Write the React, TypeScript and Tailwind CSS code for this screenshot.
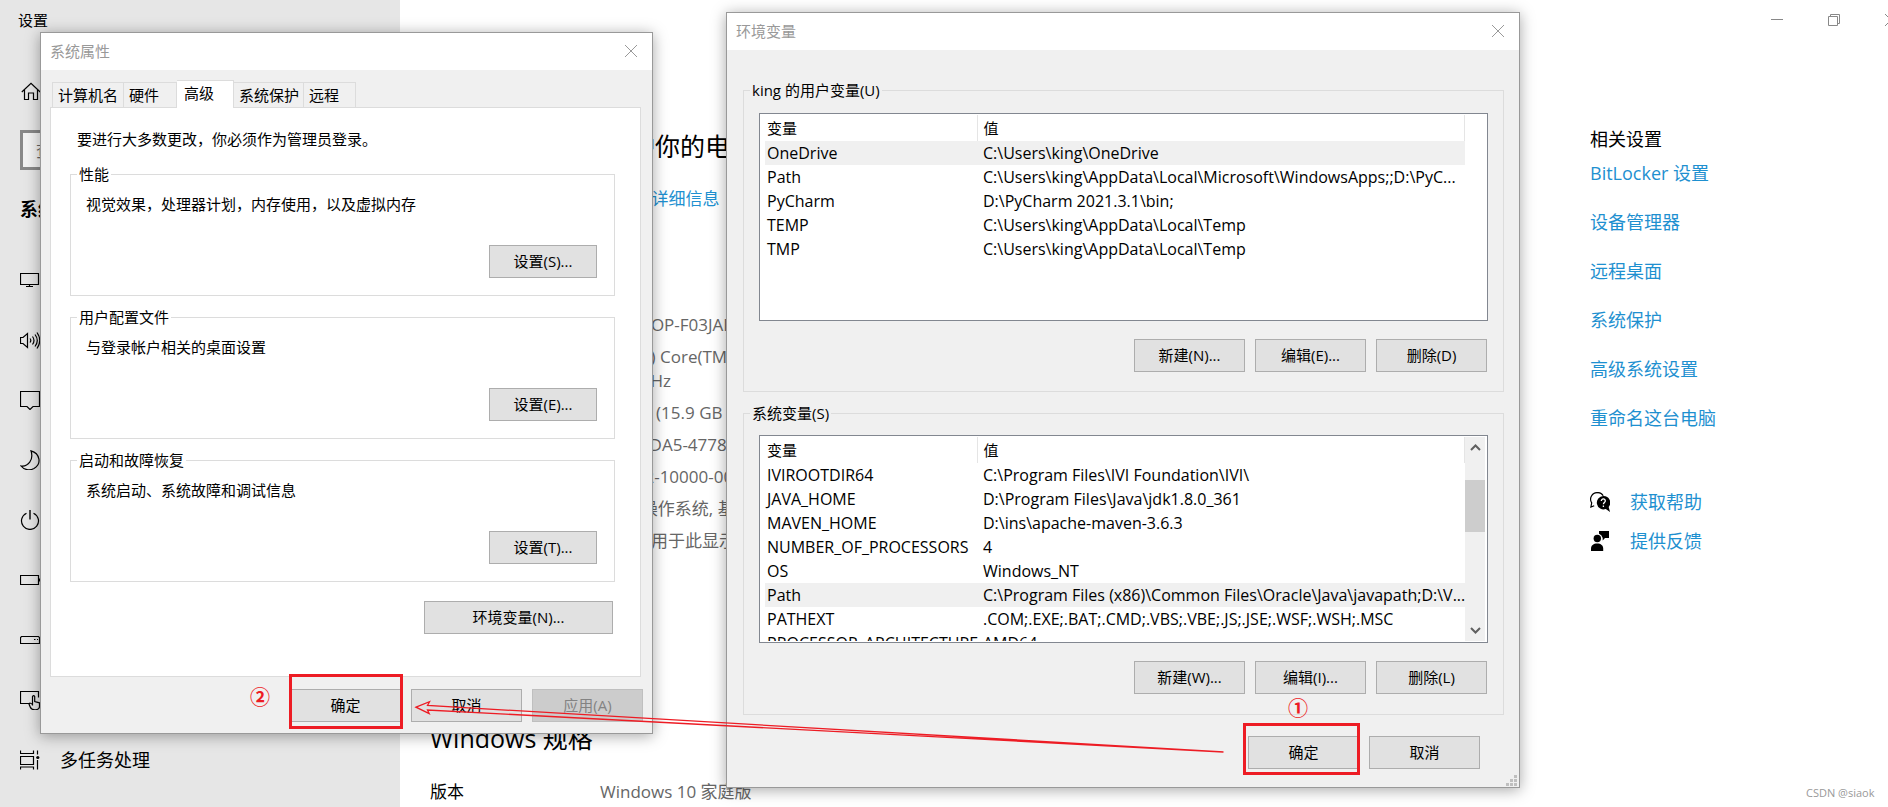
import React from 'react';
import clsx from 'clsx';

interface Variable {
  name: string;
  value: string;
}

const USER_VARIABLES: Variable[] = [
  { name: 'OneDrive', value: 'C:\\Users\\king\\OneDrive' },
  { name: 'Path', value: 'C:\\Users\\king\\AppData\\Local\\Microsoft\\WindowsApps;;D:\\PyC...' },
  { name: 'PyCharm', value: 'D:\\PyCharm 2021.3.1\\bin;' },
  { name: 'TEMP', value: 'C:\\Users\\king\\AppData\\Local\\Temp' },
  { name: 'TMP', value: 'C:\\Users\\king\\AppData\\Local\\Temp' },
];

const SYSTEM_VARIABLES: Variable[] = [
  { name: 'IVIROOTDIR64', value: 'C:\\Program Files\\IVI Foundation\\IVI\\' },
  { name: 'JAVA_HOME', value: 'D:\\Program Files\\Java\\jdk1.8.0_361' },
  { name: 'MAVEN_HOME', value: 'D:\\ins\\apache-maven-3.6.3' },
  { name: 'NUMBER_OF_PROCESSORS', value: '4' },
  { name: 'OS', value: 'Windows_NT' },
  { name: 'Path', value: 'C:\\Program Files (x86)\\Common Files\\Oracle\\Java\\javapath;D:\\V...' },
  { name: 'PATHEXT', value: '.COM;.EXE;.BAT;.CMD;.VBS;.VBE;.JS;.JSE;.WSF;.WSH;.MSC' },
  { name: 'PROCESSOR_ARCHITECTURE', value: 'AMD64' },
];

const SETTING_GROUPS = [
  { title: '性能', text: '视觉效果，处理器计划，内存使用，以及虚拟内存', button: '设置(S)...' },
  { title: '用户配置文件', text: '与登录帐户相关的桌面设置', button: '设置(E)...' },
  { title: '启动和故障恢复', text: '系统启动、系统故障和调试信息', button: '设置(T)...' },
];

const SPECS: { label: string; value: React.ReactNode }[] = [
  { label: '设备名称', value: 'DESKTOP-F03JAIK' },
  {
    label: '处理器',
    value: (
      <>
        Intel(R) Core(TM) i5
        <br />
        2.30 GHz
      </>
    ),
  },
  { label: '机带 RAM', value: '8.0 GB (15.9 GB' },
  { label: '设备 ID', value: '2C614DA5-4778' },
  { label: '产品 ID', value: 'M0342-10000-000' },
  { label: '系统类型', value: '64 位操作系统, 基于' },
  { label: '笔和触控', value: '没有可用于此显示器' },
];

const RELATED_LINKS = ['BitLocker 设置', '设备管理器', '远程桌面', '系统保护', '高级系统设置', '重命名这台电脑'];

/* ---------- Sidebar ---------- */

const NAV_ITEMS: { label: string; showLabel?: boolean; icon: React.ReactNode }[] = [
  { label: '显示', icon: <path d="M.5 3.5h18v11H.5zM6 16.5h7M9.5 14.5v2" /> },
  {
    label: '声音',
    icon: (
      <path d="M.5 7.5h2.500l4.500-4v14l-4.500-4H.500zM10 8.500q1.600 2 0 4M12.500 6.500q3 4 0 8M15 4.500q4.600 6 0 12M17 2.500q5.500 8 0 16" />
    ),
  },
  { label: '通知和操作', icon: <path d="M.5 1.500h19v15h-6.500l-3 3-3-3H.500z" /> },
  { label: '专注助手', icon: <path d="M11 .8c9 2.500 11 13 3 17.700-4.500 2.500-10 1.300-13-2.500 7 1 13-6 10-15.200z" /> },
  {
    label: '电源和睡眠',
    icon: (
      <>
        <path d="M6.500 3.200a8.500 8.500 0 1 0 7 0" />
        <path d="M10 0v9.500" strokeWidth="2" stroke="#444" />
      </>
    ),
  },
  { label: '电池', icon: <path d="M.5 5.500h18v9H.500zM19.500 8.500v3" /> },
  { label: '存储', icon: <path d="M1.500 6.500h17l1 1v6H.500v-6zM14 9.500h1.500M17 9.500h1.500" /> },
  {
    label: '平板电脑',
    icon: (
      <path d="M9 13.500H.500v-12h18v6M12.500 15.500v-9q1.200-1.800 2.200 0v5l4.800 1.300v3.700c0 4-8 4.500-9.300.500l-1.200-3q1-1.800 3.500.500" />
    ),
  },
  {
    label: '多任务处理',
    showLabel: true,
    icon: (
      <>
        <path d="M.5.500v3h13v-3M.500 6.500h13v8H.500zM.500 19.500v-2.500h13v2.500M17.500.500v4M17.500 10v9.500" />
        <circle cx="17.800" cy="7.500" r="1.600" fill="currentColor" stroke="none" />
      </>
    ),
  },
];

const Sidebar: React.FC = () => (
  <nav className="w-[400px] shrink-0 bg-[#e6e6e6] text-black">
    <div className="flex h-10 items-center pl-[18px] text-[15px]">设置</div>
    <a href="#home" aria-label="主页" className="mt-[42px] ml-[21px] block w-5">
      <svg className="h-5 w-5" viewBox="0 0 20 20" fill="none" stroke="currentColor" strokeWidth="1.2">
        <path d="M.8 10 10 1.300 19.200 10M3.500 8v9.500h4v-6.500h5v6.500h4V8" />
      </svg>
    </a>
    <div className="mt-7 ml-5">
      <input
        aria-label="查找设置"
        placeholder="查找设置"
        className="block h-10 w-[360px] border-[3px] border-[#888] bg-[#f2f2f2] pl-[13px] text-[17px] placeholder:text-[#666]"
      />
    </div>
    <h1 className="mt-[27px] ml-5 text-[18px] leading-6 font-bold">系统</h1>
    <ul className="mt-[29px]">
      {NAV_ITEMS.map((item) => (
        <li key={item.label}>
          <a href="#system" aria-label={item.label} className="flex h-[60px] items-center gap-5 pl-5">
            <svg className="h-5 w-5" viewBox="0 0 20 20" fill="none" stroke="currentColor" strokeWidth="1.200">
              {item.icon}
            </svg>
            {item.showLabel && <span className="text-[18px]">{item.label}</span>}
          </a>
        </li>
      ))}
    </ul>
  </nav>
);

/* ---------- Settings page behind the dialogs ---------- */

const SettingsPage: React.FC = () => (
  <div className="flex min-w-0 flex-1 flex-col bg-white">
    <header className="-mr-[31px] flex h-10 justify-end text-[#888]">
      <button aria-label="最小化" className="flex w-[57px] items-center justify-center">
        <svg className="h-3 w-3" viewBox="0 0 12 12" stroke="currentColor">
          <path d="M0 5.500h12" />
        </svg>
      </button>
      <button aria-label="还原" className="flex w-[57px] items-center justify-center">
        <svg className="h-3 w-3" viewBox="0 0 12 12" fill="none" stroke="currentColor">
          <path d="M.5 2.500h9v9h-9zM2.500 2.500v-2h9v9h-2" />
        </svg>
      </button>
      <button aria-label="关闭" className="flex w-[57px] items-center justify-center">
        <CloseIcon />
      </button>
    </header>

    <div className="flex flex-1">
      <main className="min-w-0 flex-1 pl-[30px]">
        <h2 className="pt-[88px] text-[25px] leading-9 whitespace-nowrap">系统正在监控并保护你的电脑</h2>
        <a href="#security" className="mt-[23px] block text-[17px] leading-6 text-[#1e90d0]">
          在 Windows 安全中心 中查看详细信息
        </a>
        <dl className="mt-[102px] grid grid-cols-[170px_1fr] gap-y-2 text-[17px] leading-6">
          {SPECS.map((spec) => (
            <React.Fragment key={spec.label}>
              <dt>{spec.label}</dt>
              <dd className="text-[#666]">{spec.value}</dd>
            </React.Fragment>
          ))}
        </dl>
        <h2 className="mt-[167px] text-[25px] leading-9">Windows 规格</h2>
        <dl className="mt-6 grid grid-cols-[170px_1fr] text-[17px] leading-6">
          <dt>版本</dt>
          <dd className="text-[#666]">Windows 10 家庭版</dd>
        </dl>
      </main>

      <aside className="flex w-[298px] shrink-0 flex-col pt-[87px] text-[18px] leading-6">
        <h3>相关设置</h3>
        <ul className="mt-[10px] flex flex-col gap-[25px] text-[#1e90d0]">
          {RELATED_LINKS.map((link) => (
            <li key={link}>
              <a href="#related">{link}</a>
            </li>
          ))}
        </ul>
        <ul className="mt-[60px] flex flex-col gap-[15px]">
          <li>
            <a href="#help" className="flex items-center gap-5">
              <svg className="h-5 w-5" viewBox="0 0 20 20">
                <path
                  d="M7.500.600a6.600 6.600 0 0 0-5.800 10.200L.900 15l3.300-1.300"
                  fill="none"
                  stroke="#000"
                  strokeWidth="1.200"
                />
                <path d="M7 .6c2.800-.2 5 1 6.200 3.200" fill="none" stroke="#000" strokeWidth="1.200" />
                <path d="M13.300 4a6.700 6.700 0 1 0 2.500 13l4.200 3-1.300-5A6.700 6.700 0 0 0 13.300 4z" />
                <path
                  d="M11.300 9c0-2.800 4.200-2.600 4 0-.1 1.500-1.900 1.500-1.900 3.200M13.400 13.600v1.500"
                  fill="none"
                  stroke="#fff"
                  strokeWidth="1.300"
                />
              </svg>
              <span className="text-[#1e90d0]">获取帮助</span>
            </a>
          </li>
          <li>
            <a href="#feedback" className="flex items-center gap-5">
              <svg className="h-5 w-5" viewBox="0 0 20 20">
                <path d="M9 0h10v7h-4l-2.300 2.500V7q-1-3.500-3.700-4.300z" />
                <circle cx="7.300" cy="7.500" r="3.700" />
                <path d="M1 20v-2.500c0-3 2.500-5 6.200-5s6 2 6 5V20z" />
              </svg>
              <span className="text-[#1e90d0]">提供反馈</span>
            </a>
          </li>
        </ul>
        <p className="mt-auto mb-1 pl-[216px] text-[11px] leading-5 whitespace-nowrap text-[#999]">CSDN @siaok</p>
      </aside>
    </div>
  </div>
);

/* ---------- Dialog parts ---------- */

const CloseIcon: React.FC = () => (
  <svg className="h-3 w-3" viewBox="0 0 12 12" stroke="currentColor">
    <path d="M0 0l12 12M12 0L0 12" />
  </svg>
);

const DialogButton: React.FC<{ children: React.ReactNode; className?: string; disabled?: boolean }> = ({
  children,
  className = 'w-[111px]',
  disabled,
}) => (
  <button
    disabled={disabled}
    className={clsx(
      'h-[33px] border pb-[2px]',
      disabled ? 'border-[#bfbfbf] bg-[#ccc] text-[#838383]' : 'border-[#adadad] bg-[#e1e1e1]',
      className
    )}
  >
    {children}
  </button>
);

const DialogTitle: React.FC<{ title: string }> = ({ title }) => (
  <div className="flex h-[37px] items-center justify-between bg-white pr-[15px] pb-[2px] pl-[9px] text-[#999]">
    <h2>{title}</h2>
    <button aria-label="关闭">
      <CloseIcon />
    </button>
  </div>
);

const GroupBox: React.FC<{ title: string; className?: string; children: React.ReactNode }> = ({
  title,
  className,
  children,
}) => (
  <fieldset className="border border-[#dcdcdc]">
    <legend className="ml-[6px] px-[2px]">{title}</legend>
    <div className={className}>{children}</div>
  </fieldset>
);

const VariableList: React.FC<{ variables: Variable[]; selected: string; scrollbar?: boolean }> = ({
  variables,
  selected,
  scrollbar,
}) => (
  <div className="flex h-[208px] overflow-hidden border border-[#828790] bg-white py-px pl-[5px]">
    <div className="min-w-0 flex-1 overflow-hidden">
      <table className="w-full table-fixed border-collapse text-left whitespace-nowrap">
        <thead>
          <tr className="h-[26px]">
            <th className="w-[212px] border-r border-[#e5e5e5] p-0 pl-[2px] font-normal">变量</th>
            <th className="border-r border-[#e5e5e5] p-0 pl-[6px] font-normal">值</th>
          </tr>
        </thead>
        <tbody className="text-[16px]">
          {variables.map((variable) => (
            <tr key={variable.name} className={clsx('h-6', variable.name === selected && 'bg-[#f0f0f0]')}>
              <td className="p-0 pl-[2px]">{variable.name}</td>
              <td className="p-0 pl-[6px]">{variable.value}</td>
            </tr>
          ))}
        </tbody>
      </table>
    </div>
    {scrollbar ? (
      <div className="mr-[2px] flex w-5 flex-col items-center justify-between bg-[#f0f0f0] text-[#606060]">
        <ScrollArrow d="M1 7l4.500-4.500L10 7" />
        <div className="mb-[66px] h-[52px] w-full bg-[#cdcdcd]" />
        <ScrollArrow d="M1 3l4.500 4.500L10 3" />
      </div>
    ) : (
      <div className="w-[22px]" />
    )}
  </div>
);

const ScrollArrow: React.FC<{ d: string }> = ({ d }) => (
  <svg className="my-[6px] h-[10px] w-[11px]" viewBox="0 0 11 10" fill="none" stroke="currentColor" strokeWidth="2">
    <path d={d} />
  </svg>
);

/* ---------- 系统属性 ---------- */

const TABS = [
  { label: '计算机名', className: 'w-[72px]' },
  { label: '硬件', className: 'w-[53px]' },
  { label: '高级', className: 'w-[57px]' },
  { label: '系统保护', className: 'w-[70px]' },
  { label: '远程', className: 'w-[52px]' },
];

const SystemProperties: React.FC = () => (
  <section className="absolute top-8 left-10 w-[613px] border border-[#999] bg-[#f0f0f0] text-[15px] leading-5 shadow-[0_2px_14px_rgba(0,0,0,0.35)]">
    <DialogTitle title="系统属性" />
    <div className="px-[9px] pt-[10px] pb-[11px]">
      <div role="tablist" className="flex items-end pl-[2px]">
        {TABS.map((tab) => {
          const active = tab.label === '高级';
          return (
            <button
              key={tab.label}
              role="tab"
              aria-selected={active}
              className={clsx(
                'border-t border-r border-[#dcdcdc] text-left first:border-l',
                active ? 'z-10 -mb-px h-7 bg-white pb-1 pl-[7px]' : 'h-[25px] bg-[#f0f0f0] pl-[5px]',
                tab.className
              )}
            >
              {tab.label}
            </button>
          );
        })}
      </div>

      <div className="mr-[2px] border border-[#dcdcdc] bg-white pt-[21px] pr-[25px] pb-[42px] pl-[19px]">
        <p className="pl-[7px]">要进行大多数更改，你必须作为管理员登录。</p>
        <div className="mt-[15px] flex flex-col gap-[11px]">
          {SETTING_GROUPS.map((group) => (
            <GroupBox key={group.title} title={group.title} className="pt-[10px] pr-[17px] pb-[17px] pl-[15px]">
              <p>{group.text}</p>
              <div className="mt-[31px] flex justify-end">
                <DialogButton className="w-[108px]">{group.button}</DialogButton>
              </div>
            </GroupBox>
          ))}
        </div>
        <div className="mt-[19px] flex justify-end pr-[2px]">
          <DialogButton className="w-[189px]">环境变量(N)...</DialogButton>
        </div>
      </div>

      <div className="mt-3 flex justify-end gap-[10px]">
        <DialogButton>确定</DialogButton>
        <DialogButton>取消</DialogButton>
        <DialogButton disabled>应用(A)</DialogButton>
      </div>
    </div>
  </section>
);

/* ---------- 环境变量 ---------- */

const EnvironmentVariables: React.FC = () => (
  <section className="absolute top-3 left-[726px] w-[794px] border border-[#999] bg-[#f0f0f0] text-[15px] leading-5 shadow-[0_2px_14px_rgba(0,0,0,0.35)]">
    <DialogTitle title="环境变量" />
    <div className="flex flex-col gap-[11px] pt-[30px] pr-[15px] pb-[18px] pl-4">
      <GroupBox title="king 的用户变量(U)" className="px-[15px] pt-[13px] pb-[19px]">
        <VariableList variables={USER_VARIABLES} selected="OneDrive" />
        <div className="mt-[18px] flex justify-end gap-[10px] pr-px">
          <DialogButton>新建(N)...</DialogButton>
          <DialogButton>编辑(E)...</DialogButton>
          <DialogButton>删除(D)</DialogButton>
        </div>
      </GroupBox>
      <GroupBox title="系统变量(S)" className="px-[15px] pt-3 pb-5">
        <VariableList variables={SYSTEM_VARIABLES} selected="Path" scrollbar />
        <div className="mt-[18px] flex justify-end gap-[10px] pr-px">
          <DialogButton>新建(W)...</DialogButton>
          <DialogButton>编辑(I)...</DialogButton>
          <DialogButton>删除(L)</DialogButton>
        </div>
      </GroupBox>
      <div className="mt-[10px] flex justify-end gap-[10px] pr-6">
        <DialogButton>确定</DialogButton>
        <DialogButton>取消</DialogButton>
      </div>
    </div>
    <svg className="absolute right-[2px] bottom-[1px] h-[11px] w-[11px]" viewBox="0 0 11 11" fill="#bfbfbf">
      <path d="M8 0h3v3H8zM4 4h3v3H4zM8 4h3v3H8zM0 8h3v3H0zM4 8h3v3H4zM8 8h3v3H8z" />
    </svg>
  </section>
);

/* ---------- Red step markers ---------- */

const StepMarkers: React.FC = () => (
  <div className="pointer-events-none absolute inset-0 text-[20px] leading-5 font-bold text-[#ed1c24]">
    <div className="absolute top-[674px] left-[289px] h-[55px] w-[114px] border-[3px] border-[#ed1c24]" />
    <div className="absolute top-[723px] left-[1243px] h-[52px] w-[117px] border-[3px] border-[#ed1c24]" />
    <span className="absolute top-[688px] left-[250px]">②</span>
    <span className="absolute top-[699px] left-[1288px]">①</span>
    <svg
      className="absolute top-[700px] left-[414px] h-[54px] w-[812px]"
      viewBox="414 700 812 54"
      fill="none"
      stroke="#ed1c24"
      strokeWidth="1.300"
    >
      <path d="M416 707.200 429.500 701.700 427.500 705.500 1223.500 752 427.500 710 429.200 713.700z" />
    </svg>
  </div>
);

export default function App() {
  return (
    <div className="relative flex min-h-screen overflow-hidden bg-white font-['Open_Sans','Noto_Sans_CJK_SC',sans-serif] text-black">
      <Sidebar />
      <SettingsPage />
      <SystemProperties />
      <EnvironmentVariables />
      <StepMarkers />
    </div>
  );
}
